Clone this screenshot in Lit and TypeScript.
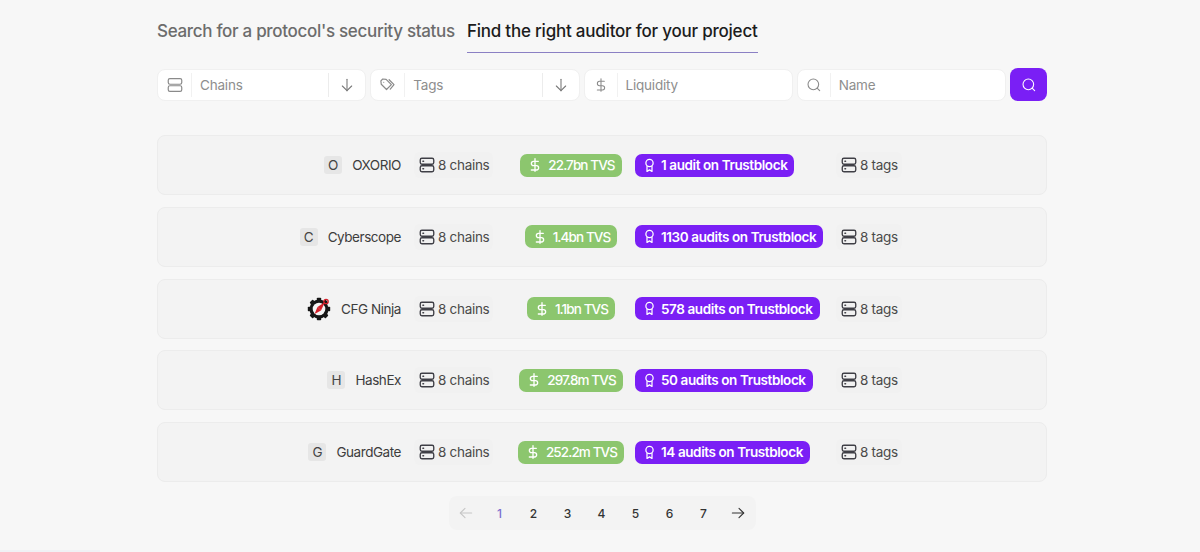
import { css, html, LitElement, nothing, svg } from 'lit'
import { customElement } from 'lit/decorators.js'

type Auditor = {
  name: string
  letter?: string
  tvs: string
  audits: string
}

const auditors: Auditor[] = [
  { name: 'OXORIO', letter: 'O', tvs: '22.7bn TVS', audits: '1 audit on Trustblock' },
  { name: 'Cyberscope', letter: 'C', tvs: '1.4bn TVS', audits: '1130 audits on Trustblock' },
  { name: 'CFG Ninja', tvs: '1.1bn TVS', audits: '578 audits on Trustblock' },
  { name: 'HashEx', letter: 'H', tvs: '297.8m TVS', audits: '50 audits on Trustblock' },
  { name: 'GuardGate', letter: 'G', tvs: '252.2m TVS', audits: '14 audits on Trustblock' },
]

const icon = (size: number, body: unknown) => html`<svg
  width=${size}
  height=${size}
  viewBox="0 0 24 24"
  fill="none"
  stroke="currentColor"
  stroke-width="1.6"
  stroke-linecap="round"
  stroke-linejoin="round"
>
  ${body}
</svg>`

const serverIcon = (size = 18) =>
  icon(
    size,
    svg`<rect x="3" y="3.5" width="18" height="7.5" rx="2.2" /><rect x="3" y="13" width="18" height="7.5" rx="2.2" />`,
  )
const serverDotIcon = (size = 18) =>
  icon(
    size,
    svg`<rect x="3" y="3" width="18" height="8" rx="2.2" stroke-width="1.8"/><rect x="3" y="13" width="18" height="8" rx="2.2" stroke-width="1.8"/><path d="M6.5 7h1M6.5 17h1" stroke-width="1.8"/>`,
  )
const tagIcon = (size = 18) =>
  icon(
    size,
    svg`<path d="M2.5 6.5 3 11l7 7 6.5-6.5-7-7-4.5-.5z" /><path d="M13.5 5 20 11.500 15 17.500" /><path d="M6.300 8.300h.01" />`,
  )
const dollarIcon = (size = 18) =>
  icon(
    size,
    svg`<path d="M12 2.500v19" /><path d="M17 6.500H9.800a3 3 0 0 0 0 6.500h4.400a3 3 0 0 1 0 6.500H6.500" />`,
  )
const searchIcon = (size = 18) =>
  icon(size, svg`<circle cx="11" cy="11" r="8" /><path d="m20.500 20.500-3.800-3.800" />`)
const downIcon = (size = 16) => icon(size, svg`<path d="M12 3.500v17" /><path d="m5 13.500 7 7 7-7" />`)
const leftIcon = (size = 16) => icon(size, svg`<path d="M20.500 12h-17" /><path d="m10.500 5-7 7 7 7" />`)
const rightIcon = (size = 16) => icon(size, svg`<path d="M3.500 12h17" /><path d="m13.500 5 7 7-7 7" />`)
const awardIcon = (size = 16) =>
  icon(
    size,
    svg`<circle cx="12" cy="8" r="5.800" stroke-width="2"/><path d="M8 13.500v8l4-2.500 4 2.500v-8" stroke-width="2"/>`,
  )

const cfgLogo = html`<svg class="logo" width="24" height="24" viewBox="0 0 24 24">
  <g fill="#161616">
    <circle cx="12" cy="12" r="9.500" />
    <rect x="9.800" y="0.800" width="4.400" height="22.400" rx="0.800" />
    <rect x="9.800" y="0.800" width="4.400" height="22.400" rx="0.800" transform="rotate(45 12 12)" />
    <rect x="9.800" y="0.800" width="4.400" height="22.400" rx="0.800" transform="rotate(90 12 12)" />
    <rect x="9.800" y="0.800" width="4.400" height="22.400" rx="0.800" transform="rotate(135 12 12)" />
  </g>
  <circle cx="12" cy="12" r="6.300" fill="#f4f4f4" />
  <path d="M7.500 17 10.500 10 14 13.500z" fill="#d3202a" />
  <path d="M10.500 10 18 5 14 13.500z" fill="#d3202a" />
  <circle cx="19" cy="4.500" r="2.200" fill="none" stroke="#d3202a" stroke-width="1.300" />
</svg>`

@customElement('app-root')
export class AppRoot extends LitElement {
  static styles = css`
    :host {
      display: block;
      position: relative;
      height: 552px;
      overflow: hidden;
      background: #f7f7f7;
      font-family: Inter, 'Noto Sans', sans-serif;
      color: #444;
    }

    .page {
      width: 890px;
      margin-left: 157px;
      padding-top: 19px;
      box-sizing: border-box;
    }

    .tabs {
      display: flex;
      gap: 12px;
      font-size: 17px;
      font-weight: 500;
      line-height: 24px;
    }

    .tab {
      height: 34px;
      white-space: nowrap;
      color: #6c6c6c;
      letter-spacing: -0.31px;
      box-sizing: border-box;
    }

    .tab.active {
      color: #1c1c1c;
      letter-spacing: -0.22px;
      border-bottom: 1px solid #8b80c4;
    }

    .filters {
      display: flex;
      gap: 4px;
      align-items: center;
      margin-top: 15px;
    }

    .field {
      display: flex;
      align-items: center;
      flex: 0 0 209.250px;
      height: 32px;
      box-sizing: border-box;
      background: #fff;
      border: 1px solid #f0f0f0;
      border-radius: 8px;
      color: #8e8e8e;
      font-size: 13.500px;
      letter-spacing: -0.2px;
    }

    .field-icon {
      display: flex;
      justify-content: center;
      align-items: center;
      flex: none;
      width: 33px;
      height: 24px;
      border-right: 1px solid #f1f1f1;
      color: #8a8a8a;
    }

    .field.short .field-icon {
      width: 32px;
    }

    .field-label {
      flex: 1;
      padding-left: 8px;
    }

    .field-end {
      display: flex;
      justify-content: center;
      align-items: center;
      flex: none;
      width: 36px;
      height: 24px;
      border-left: 1px solid #ececec;
      color: #777;
    }

    .search-btn {
      display: flex;
      justify-content: center;
      align-items: center;
      width: 37px;
      height: 33px;
      border-radius: 8px;
      background: #7a1ff5;
      color: #fff;
    }

    .rows {
      display: flex;
      flex-direction: column;
      gap: 11.750px;
      margin-top: 34px;
    }

    .row {
      display: grid;
      grid-template-columns: 243px 106px 128px 188px 1fr;
      align-items: center;
      height: 60px;
      box-sizing: border-box;
      background: #f3f3f3;
      border: 1px solid #ececec;
      border-radius: 8px;
      font-size: 13.500px;
    }

    .name {
      display: flex;
      justify-content: flex-end;
      align-items: center;
      gap: 10px;
      color: #3d3d3d;
      letter-spacing: -0.45px;
    }

    .letter {
      display: flex;
      justify-content: center;
      align-items: center;
      width: 18px;
      height: 18px;
      border-radius: 3px;
      background: #e6e6e6;
      color: #444;
      letter-spacing: 0;
    }

    .count {
      display: flex;
      align-items: center;
      justify-self: start;
      gap: 2px;
      margin-left: 13px;
      padding: 4px;
      border-radius: 6px;
      background: #f1f1f1;
      color: #4a4a4a;
      letter-spacing: -0.3px;
    }

    .count svg {
      color: #3f3f46;
    }

    .tvs-cell {
      display: flex;
      justify-content: center;
    }

    .pill {
      display: inline-flex;
      align-items: center;
      height: 23px;
      padding: 0 7px;
      border-radius: 7px;
      color: #fff;
      font-weight: 600;
      white-space: nowrap;
    }

    .pill.tvs {
      gap: 5px;
      padding-left: 7px;
      background: #8cc66e;
      font-weight: 500;
      letter-spacing: -0.9px;
    }

    .pill.tvs svg {
      stroke-width: 2;
    }

    .pill.audit {
      gap: 4px;
      background: #7a1ff5;
      letter-spacing: -0.4px;
    }

    .pager {
      display: flex;
      align-items: center;
      width: 307px;
      height: 34px;
      margin: 14px auto 0;
      background: #f3f3f3;
      border-radius: 8px;
      color: #333;
      font-size: 12px;
      font-weight: 500;
    }

    .pager span {
      display: flex;
      justify-content: center;
      align-items: center;
      width: 34px;
      height: 34px;
    }

    .pager .current {
      color: #7d6fd0;
    }

    .pager .off {
      color: #c6c6c6;
    }

    .corner {
      position: absolute;
      left: 0;
      bottom: 0;
      width: 100px;
      height: 2px;
      background: #f0f1f5;
    }
  `

  private renderField(ic: unknown, label: string, end = false) {
    return html`<div class="field ${end ? '' : 'short'}">
      <div class="field-icon">${ic}</div>
      <div class="field-label">${label}</div>
      ${end ? html`<div class="field-end">${downIcon()}</div>` : nothing}
    </div>`
  }

  private renderRow(a: Auditor) {
    return html`<div class="row">
      <div class="name">
        ${a.letter ? html`<span class="letter">${a.letter}</span>` : cfgLogo}
        <span>${a.name}</span>
      </div>
      <div class="count">${serverDotIcon()}<span>8 chains</span></div>
      <div class="tvs-cell">
        <span class="pill tvs">${dollarIcon(16)}<span>${a.tvs}</span></span>
      </div>
      <div>
        <span class="pill audit">${awardIcon(15)}<span>${a.audits}</span></span>
      </div>
      <div class="count">${serverDotIcon()}<span>8 tags</span></div>
    </div>`
  }

  protected render() {
    return html`
      <div class="page">
        <div class="tabs">
          <div class="tab">Search for a protocol's security status</div>
          <div class="tab active">Find the right auditor for your project</div>
        </div>
        <div class="filters">
          ${this.renderField(serverIcon(), 'Chains', true)} ${this.renderField(tagIcon(), 'Tags', true)}
          ${this.renderField(dollarIcon(16), 'Liquidity')} ${this.renderField(searchIcon(16), 'Name')}
          <div class="search-btn">${searchIcon(16)}</div>
        </div>
        <div class="rows">${auditors.map((a) => this.renderRow(a))}</div>
        <div class="pager">
          <span class="off">${leftIcon()}</span>
          <span class="current">1</span>
          ${['2', '3', '4', '5', '6', '7'].map((n) => html`<span>${n}</span>`)}
          <span>${rightIcon()}</span>
        </div>
      </div>
      <div class="corner"></div>
    `
  }
}
